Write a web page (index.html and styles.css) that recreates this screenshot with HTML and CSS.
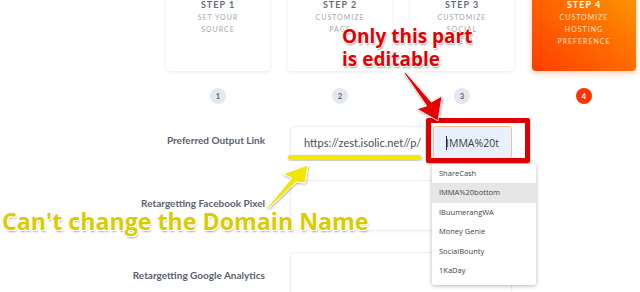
FILE: index.html
```html
<!DOCTYPE html>
<html>
<head>
<meta charset="utf-8">
<link rel="stylesheet" href="styles.css">
</head>
<body>
<div class="page">
  <div class="steps">
    <div class="card"><div class="step-title">STEP 1</div><div class="step-sub">SET YOUR<br>SOURCE</div></div>
    <div class="card"><div class="step-title">STEP 2</div><div class="step-sub">CUSTOMIZE<br>PAGE</div></div>
    <div class="card"><div class="step-title">STEP 3</div><div class="step-sub">CUSTOMIZE<br>SOCIAL<br>VIEW</div></div>
    <div class="card active"><div class="step-title">STEP 4</div><div class="step-sub">CUSTOMIZE<br>HOSTING<br>PREFERENCE</div></div>
  </div>
  <div class="dots">
    <div class="slot"><span class="dot">1</span></div>
    <div class="slot"><span class="dot">2</span></div>
    <div class="slot"><span class="dot">3</span></div>
    <div class="slot"><span class="dot active">4</span></div>
  </div>
  <div class="form">
    <div class="label">Preferred Output Link</div>
    <div class="link-row">
      <div class="input domain">https://zest.isolic.net//p/</div>
      <div class="input editable"><span class="caret"></span>IMMA%20t</div>
    </div>
    <div class="label">Retargetting Facebook Pixel</div>
    <div class="input tall"></div>
    <div class="label">Retargetting Google Analytics</div>
    <div class="input tall"></div>
  </div>

  <div class="redbox"></div>
  <ul class="dropdown">
    <li>ShareCash</li>
    <li class="hl">IMMA%20bottom</li>
    <li>IBuumerangWA</li>
    <li>Money Genie</li>
    <li>SocialBounty</li>
    <li>1KaDay</li>
  </ul>
  <svg class="arrows" width="640" height="292" viewBox="0 0 640 292">
    <defs>
      <filter id="sh" x="-20%" y="-20%" width="140%" height="140%">
        <feDropShadow dx="0.5" dy="1" stdDeviation="0.8" flood-color="#000" flood-opacity="0.35"/>
      </filter>
    </defs>
    <rect x="288" y="155" width="133" height="4.5" rx="2.25" fill="#f7e600" filter="url(#sh)"/>
    <polygon points="404.4,73.5 405.6,72.5 431.3,102.1 442,96 438,121 417,109 426.7,105.9" fill="#e60000" stroke="#fff" stroke-width="0.8" filter="url(#sh)"/>
    <polygon points="267.4,207.5 268.6,208.5 296.2,182 305,183 308,165 283,174 291.8,178" fill="#f2e600" stroke="#fff" stroke-width="1" filter="url(#sh)"/>
  </svg>
  <div class="note red">Only this part<br>is editable</div>
  <div class="note yellow">Can't change the Domain Name</div>
</div>
</body>
</html>
```
FILE: styles.css
```css
html, body {
  margin: 0;
  padding: 0;
  background: #fff;
}
.page {
  position: relative;
  width: 640px;
  height: 292px;
  overflow: hidden;
  font-family: Lato, "Open Sans", sans-serif;
}
.steps {
  display: flex;
  gap: 18px;
  padding-left: 166px;
  margin-top: -20px;
}
.card {
  width: 104px;
  height: 91px;
  box-sizing: border-box;
  padding-top: 19px;
  background: #fff;
  border-radius: 4px;
  box-shadow: 0 1px 4px rgba(60, 70, 100, 0.12);
  text-align: center;
}
.step-title {
  font-size: 9px;
  font-weight: 700;
  letter-spacing: 1px;
  line-height: 12px;
  color: #656b78;
}
.step-sub {
  font-size: 7px;
  letter-spacing: 1px;
  line-height: 12px;
  color: #a3a7b0;
}
.card.active {
  background: linear-gradient(to bottom left, #ffa000 0%, #ff6f00 45%, #ff3d00 100%);
  box-shadow: 0 2px 6px rgba(255, 80, 0, 0.3);
}
.card.active .step-title {
  color: #fff;
}
.card.active .step-sub {
  color: #ffe3cc;
}
.dots {
  display: flex;
  gap: 18px;
  padding-left: 166px;
  margin-top: 17px;
}
.slot {
  width: 104px;
  display: flex;
  justify-content: center;
}
.dot {
  width: 16px;
  height: 16px;
  border-radius: 50%;
  background: #e3e8ee;
  color: #5c6270;
  font-size: 7.5px;
  font-weight: 700;
  display: flex;
  align-items: center;
  justify-content: center;
}
.dot.active {
  background: #ff3300;
  color: #fff;
}
.form {
  display: grid;
  grid-template-columns: 265px 222px;
  grid-template-rows: 33px 51px 51px;
  column-gap: 25px;
  row-gap: 21px;
  margin-top: 22px;
}
.label {
  text-align: right;
  font-size: 10px;
  font-weight: 700;
  color: #5b6170;
  align-self: center;
  padding-bottom: 6px;
}
.link-row {
  display: flex;
  gap: 7px;
}
.input {
  box-sizing: border-box;
  border: 1px solid #eceef8;
  border-radius: 4px;
  background: #fff;
  box-shadow: 0 1px 3px rgba(80, 90, 140, 0.05);
}
.domain {
  width: 136px;
  height: 33px;
  padding-left: 13px;
  display: flex;
  align-items: center;
  font-size: 11px;
  color: #4a4d55;
  white-space: nowrap;
  overflow: hidden;
}
.editable {
  width: 79px;
  height: 33px;
  background: #e8f0fe;
  border: 1px solid #f6c08c;
  border-radius: 3px;
  padding-left: 12px;
  display: flex;
  align-items: center;
  font-family: "Open Sans", sans-serif;
  font-size: 10.5px;
  color: #3d3f45;
  white-space: nowrap;
  overflow: hidden;
}
.caret {
  display: inline-block;
  width: 1px;
  height: 14px;
  background: #222;
  margin-right: -1px;
}
.redbox {
  position: absolute;
  left: 426px;
  top: 118px;
  width: 104px;
  height: 45px;
  box-sizing: border-box;
  border: 5px solid #e00000;
  border-radius: 2px;
  box-shadow: 0 1px 2px rgba(0, 0, 0, 0.3);
}
.dropdown {
  position: absolute;
  left: 432px;
  top: 164px;
  width: 104px;
  margin: 0;
  padding: 0 0 5px 0;
  list-style: none;
  background: #fff;
  box-shadow: 0 1px 4px rgba(0, 0, 0, 0.28);
  border-radius: 0 0 3px 3px;
}
.dropdown li {
  height: 19.4px;
  line-height: 19.4px;
  padding-left: 7px;
  font-family: "Open Sans", sans-serif;
  font-size: 7.5px;
  color: #3c3f46;
}
.dropdown li.hl {
  background: #e6e6e6;
}
.arrows {
  position: absolute;
  left: 0;
  top: 0;
  pointer-events: none;
}
.note {
  position: absolute;
  font-family: "Open Sans", sans-serif;
  font-weight: 700;
  white-space: nowrap;
}
.note.red {
  left: 342px;
  top: 25px;
  font-size: 19px;
  line-height: 23px;
  color: #e30000;
  text-shadow: -1px 0 #fff, 1px 0 #fff, 0 -1px #fff, 0 1px #fff, 1px 1.5px 2px rgba(0, 0, 0, 0.35);
}
.note.yellow {
  left: 2px;
  top: 206px;
  font-size: 23.2px;
  line-height: 30px;
  color: #d9cd00;
  text-shadow: -1.2px 0 #fff, 1.2px 0 #fff, 0 -1.2px #fff, 0 1.2px #fff, 1px 1px #fff, -1px -1px #fff, 1px -1px #fff, -1px 1px #fff, 1px 2px 2px rgba(0, 0, 0, 0.35);
}
```
